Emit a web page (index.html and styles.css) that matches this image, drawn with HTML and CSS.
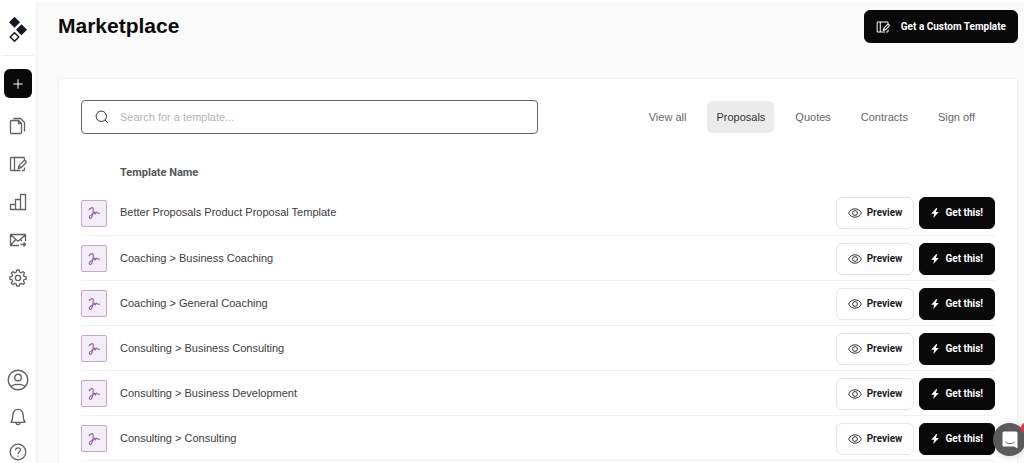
FILE: index.html
```
<!DOCTYPE html>
<html lang="en">
<head>
<meta charset="utf-8">
<title>Marketplace</title>
<link rel="stylesheet" href="styles.css">
</head>
<body>
<svg class="sprite" aria-hidden="true">
  <symbol id="sign" viewBox="0 0 14 14"><path d="M2 4.200C2.600 2 6 .6 6.200 2.600C6.400 5 5.800 9.500 4.600 11.500C3.600 13.200 1.600 12.300 2.600 10.300C3.600 8.600 6.400 7.800 7.400 6.200C8 5.200 7.400 8.500 8.200 7.800C8.900 7 9.300 5.700 9.900 6.500C10.300 7.300 10.600 7.500 13 7.200"/></symbol>
  <symbol id="eye" viewBox="0 0 14 10"><path d="M.6 5C2 2.300 4.300.8 7 .8S12 2.300 13.400 5C12 7.700 9.700 9.200 7 9.200S2 7.700.6 5Z"/><circle cx="7" cy="5" r="2.400"/></symbol>
  <symbol id="bolt" viewBox="0 0 8 10"><path d="M5.300 0 .2 5.800H3.100L2.300 10 7.800 3.900H4.900L6.200.2Z"/></symbol>
  <symbol id="edit" viewBox="0 0 18 18"><path d="M11.500 15.500H2.500A1 1 0 0 1 1.500 14.500V3.500A1 1 0 0 1 2.500 2.500H14.500A1 1 0 0 1 15.500 3.500V5M5.500 2.500V15.500M15.500 12.500V14.500A1 1 0 0 1 14.500 15.500H13M9.200 13.500 10 10.600 14.700 6A1.300 1.300 0 0 1 16.700 8L12.100 12.700ZM10 10.600 12.100 12.700"/></symbol>
</svg>
<div class="app">
  <aside class="sidebar">
    <a class="logo" href="#" aria-label="Home">
      <svg width="20" height="26" viewBox="0 0 20 26"><path class="solid" d="M6.500.8 12 6.300 6.500 11.800 1 6.300ZM13.500 8.300 19 13.800 13.500 19.300 8 13.800Z"/><path class="hollow" d="M6.500 16.700 10.800 21 6.500 25.300 2.200 21Z"/></svg>
    </a>
    <button class="add" type="button" aria-label="New"><svg width="10" height="10" viewBox="0 0 10 10"><path d="M5 .3V9.700M.3 5H9.700"/></svg></button>
    <nav class="menu" aria-label="Main">
      <a href="#" aria-label="Documents"><svg class="icon" viewBox="0 0 18 18"><path d="M2.500 3.500H9.500L12.500 6.500V15.500A1 1 0 0 1 11.500 16.500H2.500A1 1 0 0 1 1.500 15.500V4.500A1 1 0 0 1 2.500 3.500ZM9.500 3.500V6.500H12.500M4.500 1.500H11.500L15.500 5.500V14.500"/></svg></a>
      <a href="#" aria-label="Templates"><svg class="icon"><use href="#edit"/></svg></a>
      <a href="#" aria-label="Reports"><svg class="icon" viewBox="0 0 18 18"><path d="M1.500 11.500H6.500V16.500H1.500ZM6.500 16.500V6.500H11.500V16.500ZM11.500 16.500V1.500H16.500V16.500Z"/></svg></a>
      <a href="#" aria-label="Messages"><svg class="icon" viewBox="0 0 18 18"><path d="M10 14.500H1.500V3.500H16.500V10M1.500 3.800 9 10.200 16.500 3.800M1.500 14.300 6.700 8.500M11.500 8.500 13 10M11.500 13.500H16.500M14.500 11.500 16.500 13.500 14.500 15.500"/></svg></a>
      <a href="#" aria-label="Settings"><svg class="icon" viewBox="0 0 18 18"><path d="M7.800 1H10.200L10.800 3.200 12.200 3.800 14.200 2.600 15.600 4 14.400 5.900 15 7.300 17.200 7.900V10.100L15 10.700 14.400 12.100 15.600 14.100 14.200 15.500 12.200 14.300 10.800 14.900 10.200 17H7.800L7.200 14.900 5.800 14.300 3.800 15.500 2.400 14.100 3.600 12.100 3 10.700.8 10.100V7.900L3 7.300 3.600 5.900 2.400 4 3.800 2.600 5.800 3.800 7.200 3.200Z"/><circle cx="9" cy="9" r="2.600"/></svg></a>
    </nav>
    <nav class="account" aria-label="Account">
      <a href="#" aria-label="Profile"><svg class="icon big" viewBox="0 0 22 22"><circle cx="11" cy="11" r="9.800"/><circle cx="11" cy="8.500" r="3.300"/><path d="M4 17.700C6 14.600 16 14.600 18 17.700"/></svg></a>
      <a href="#" aria-label="Notifications"><svg class="icon" viewBox="0 0 18 18"><path d="M2 14.300C3.600 12.500 3.700 10.500 3.800 7.500C4 3.500 6 1.300 9 1.300S14 3.500 14.200 7.500C14.300 10.500 14.400 12.500 16 14.300ZM7 14.500C7 17.300 11 17.300 11 14.500"/></svg></a>
      <a href="#" aria-label="Help"><svg class="icon" viewBox="0 0 18 18"><circle cx="9" cy="9" r="7.800"/><path d="M6.600 7.200C6.700 3.900 11.500 4.100 11.400 7C11.300 8.800 9 8.800 9 11M9 12.500V13.700"/></svg></a>
    </nav>
  </aside>
  <main class="main">
    <header class="top">
      <h1>Marketplace</h1>
      <button class="btn dark custom" type="button"><svg class="icon small"><use href="#edit"/></svg>Get a Custom Template</button>
    </header>
    <section class="card">
      <div class="filters">
        <label class="search">
          <svg width="14" height="14" viewBox="0 0 14 14"><circle cx="6.300" cy="6.300" r="5.200"/><path d="M10.100 10.100 13 13"/></svg>
          <input type="search" placeholder="Search for a template..." aria-label="Search for a template">
        </label>
        <nav class="tabs" aria-label="Template type">
          <a href="#">View all</a>
          <a href="#" class="active" aria-current="page">Proposals</a>
          <a href="#">Quotes</a>
          <a href="#">Contracts</a>
          <a href="#">Sign off</a>
        </nav>
      </div>
      <table class="templates">
        <thead><tr><th class="thumb"></th><th>Template Name</th><th></th></tr></thead>
        <tbody>
          <tr><td class="thumb"><span class="tile"><svg><use href="#sign"/></svg></span></td><td>Better Proposals Product Proposal Template</td><td class="actions"><button class="btn light" type="button"><svg class="eye"><use href="#eye"/></svg>Preview</button><button class="btn dark get" type="button"><svg class="bolt"><use href="#bolt"/></svg>Get this!</button></td></tr>
          <tr><td class="thumb"><span class="tile"><svg><use href="#sign"/></svg></span></td><td>Coaching &gt; Business Coaching</td><td class="actions"><button class="btn light" type="button"><svg class="eye"><use href="#eye"/></svg>Preview</button><button class="btn dark get" type="button"><svg class="bolt"><use href="#bolt"/></svg>Get this!</button></td></tr>
          <tr><td class="thumb"><span class="tile"><svg><use href="#sign"/></svg></span></td><td>Coaching &gt; General Coaching</td><td class="actions"><button class="btn light" type="button"><svg class="eye"><use href="#eye"/></svg>Preview</button><button class="btn dark get" type="button"><svg class="bolt"><use href="#bolt"/></svg>Get this!</button></td></tr>
          <tr><td class="thumb"><span class="tile"><svg><use href="#sign"/></svg></span></td><td>Consulting &gt; Business Consulting</td><td class="actions"><button class="btn light" type="button"><svg class="eye"><use href="#eye"/></svg>Preview</button><button class="btn dark get" type="button"><svg class="bolt"><use href="#bolt"/></svg>Get this!</button></td></tr>
          <tr><td class="thumb"><span class="tile"><svg><use href="#sign"/></svg></span></td><td>Consulting &gt; Business Development</td><td class="actions"><button class="btn light" type="button"><svg class="eye"><use href="#eye"/></svg>Preview</button><button class="btn dark get" type="button"><svg class="bolt"><use href="#bolt"/></svg>Get this!</button></td></tr>
          <tr><td class="thumb"><span class="tile"><svg><use href="#sign"/></svg></span></td><td>Consulting &gt; Consulting</td><td class="actions"><button class="btn light" type="button"><svg class="eye"><use href="#eye"/></svg>Preview</button><button class="btn dark get" type="button"><svg class="bolt"><use href="#bolt"/></svg>Get this!</button></td></tr>
        </tbody>
      </table>
    </section>
  </main>
</div>
<button class="chat" type="button" aria-label="Open chat"><svg width="16" height="18" viewBox="0 0 16 18"><path class="bubble" d="M2 .5H14A1.500 1.500 0 0 1 15.500 2V17.500L12 15.500H2A1.500 1.500 0 0 1 .5 14V2A1.500 1.500 0 0 1 2 .5Z"/><path class="smile" d="M3.300 11C6 13.200 10 13.200 12.700 11"/></svg><span class="badge"></span></button>
</body>
</html>
```
FILE: styles.css
```
* { box-sizing: border-box; }
body { margin: 0; background: #fafafa; color: #3c3c3c; font: 11px/16px "Liberation Sans", Arial, sans-serif; }
a { color: inherit; text-decoration: none; }
button, input { font: inherit; }
button { cursor: pointer; }
svg { display: block; fill: none; stroke: currentColor; stroke-linejoin: round; }
.sprite { position: absolute; width: 0; height: 0; }

.app { display: flex; height: 100vh; overflow: hidden; border-top: 2px solid #fff; }

.sidebar { flex: none; width: 38px; display: flex; flex-direction: column; align-items: center; background: #fff; border-right: 2px solid #f4f4f4; color: #626262; }
.logo { flex: none; display: flex; align-items: center; justify-content: center; width: 32px; height: 54px; border-bottom: 1px solid #eee; color: #151a22; }
.logo .solid { fill: currentColor; stroke: none; }
.logo .hollow { stroke-width: 1.5; }
.add { flex: none; display: flex; align-items: center; justify-content: center; width: 28px; height: 29px; margin-top: 13px; padding: 0; border: 0; border-radius: 6px; background: #090909; color: #fff; }
.menu { display: flex; flex-direction: column; gap: 20px; margin-top: 19px; }
.account { display: flex; flex-direction: column; align-items: center; gap: 17px; margin-top: auto; padding-bottom: 2px; }
.icon { width: 18px; height: 18px; stroke-width: 1.3; }
.icon.big { width: 22px; height: 22px; stroke-width: 1.4; }
.icon.small { width: 14px; height: 14px; }

.main { flex: 1; min-width: 0; padding: 8px 6px 0 20px; }
.top { display: flex; align-items: flex-start; justify-content: space-between; }
h1 { margin: 0; color: #0b0b0b; font-size: 21px; line-height: 32px; }

.btn { display: inline-flex; align-items: center; justify-content: center; height: 32px; padding: 0 11px; border: 1px solid #090909; border-radius: 6px; font: bold 10px/16px Roboto, sans-serif; vertical-align: middle; white-space: nowrap; }
.dark { background: #090909; color: #fff; }
.light { background: #fff; border-color: #e6e6e9; color: #1d1d1d; gap: 5px; }
.custom { height: 33px; gap: 11px; }
.get { gap: 6px; margin-left: 5px; }
.eye { width: 14px; height: 10px; color: #333; }
.bolt { width: 8px; height: 10px; fill: currentColor; stroke: none; }

.card { min-height: 100vh; margin-top: 35px; padding: 21px 22px; background: #fff; border: 1px solid #f0f0f0; border-radius: 4px; }
.filters { display: flex; align-items: center; justify-content: space-between; }
.search { display: flex; align-items: center; gap: 11px; width: 50%; height: 34px; padding: 0 13px; border: 1px solid #666; border-radius: 4px; color: #2c2c2c; }
.search input { flex: 1; min-width: 0; padding: 0; border: 0; outline: 0; background: none; color: #333; }
.search input::placeholder { color: #b4b4b4; }
.tabs { display: flex; gap: 12px; margin-right: 11px; color: #666; }
.tabs a { padding: 8px 9px; border-radius: 5px; }
.tabs .active { background: #ebebeb; color: #333; }

.templates { width: 100%; margin-top: 22px; border-collapse: collapse; }
.templates th { height: 34px; padding: 0; text-align: left; color: #555; font-family: Roboto, sans-serif; }
.templates td { height: 45px; padding: 0; border-bottom: 1px solid #f1f1f1; }
.templates .thumb { width: 39px; }
.templates .actions { text-align: right; white-space: nowrap; }
.templates td.thumb, .templates td.actions { padding-top: 2px; }
.tile { display: flex; align-items: center; justify-content: center; width: 26px; height: 27px; border: 1px solid #c6a5d3; border-radius: 2px; background: #f3edf6; color: #9b62b0; }
.tile svg { width: 14px; height: 14px; stroke-width: 1.2; }

.chat { position: fixed; right: -2px; bottom: 7px; display: flex; align-items: center; justify-content: center; width: 33px; height: 33px; padding: 0; border: 0; border-radius: 50%; background: #5a5a5a; box-shadow: 0 1px 8px rgba(0, 0, 0, 0.15); }
.chat .bubble { fill: #fff; stroke: none; }
.chat .smile { stroke: #5a5a5a; }
.badge { position: absolute; top: -1px; right: -7px; width: 12px; height: 12px; border-radius: 50%; background: #e5343d; }
```
